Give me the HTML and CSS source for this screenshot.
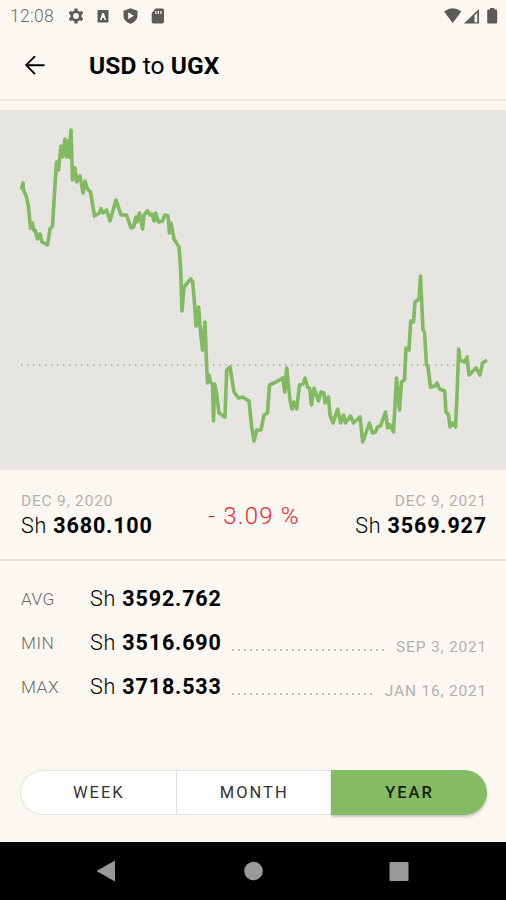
FILE: index.html
```html
<!DOCTYPE html>
<html lang="en">
<head>
    <meta charset="UTF-8">
    <meta name="viewport" content="width=device-width, initial-scale=1.0">
    <title>USD to UGX</title>
    <link rel="stylesheet" href="styles.css">
</head>
<body>
    <div class="screen">
        <!-- Status bar -->
        <div class="status-bar">
            <span class="clock">12:08</span>
            <svg class="notifications" width="100" height="18" viewBox="0 0 100 18">
                <g fill="none" stroke="#5c5b58">
                    <circle cx="9" cy="9" r="4.3" stroke-width="2.8"/>
                    <path d="M9 1.5v3M9 13.5v3M2.5 5.2l2.6 1.5M12.9 11.3l2.6 1.5M2.5 12.8l2.6-1.5M12.9 6.7l2.6-1.5" stroke-width="3.2"/>
                </g>
                <path fill="#5c5b58" fill-rule="evenodd" d="M30.500 3h11v12.500h-11zM33 13h1.600l.6-2h1.700l.6 2h1.600l-2.200-7h-1.700z"/>
                <path fill="#5c5b58" fill-rule="evenodd" d="M63.500 1.200l7 2.600v4.700c0 3.900-2.800 6.800-7 8.300-4.200-1.500-7-4.400-7-8.300V3.800zM61.200 5.300v7l5.600-3.500z"/>
                <path fill="#5c5b58" fill-rule="evenodd" d="M88.500 1.500h6.700q1.800 0 1.800 1.800v11.400q0 1.800-1.800 1.800h-8.700q-1.800 0-1.800-1.800V6zM88.300 4v3h1.200V4zM90.800 4v3H92V4zM93.300 4v3h1.200V4z"/>
            </svg>
            <svg class="system" width="56" height="18" viewBox="0 0 56 18">
                <path fill="#5c5b58" d="M1 4.500q8.700-6.500 17.400 0L9.700 16z"/>
                <path fill="#5c5b58" fill-rule="evenodd" d="M21 16.500L36 2v14.500zM31.500 8.500v6.800h2.800V5.800z"/>
                <path fill="#5c5b58" d="M47 1h4.500v1.600h1.700q1 0 1 1v12q0 1-1 1h-8q-1 0-1-1v-12q0-1 1-1H47z"/>
            </svg>
        </div>

        <!-- Title bar -->
        <header class="app-bar">
            <svg width="20" height="20" viewBox="0 0 20 20">
                <path d="M19.500 9.200H1.500M10 .2L1.200 9.200l8.800 9" fill="none" stroke="#000" stroke-width="1.900"/>
            </svg>
            <h1><b>USD</b> to <b>UGX</b></h1>
        </header>

        <!-- Rate chart -->
        <svg class="chart" width="506" height="360" viewBox="0 0 506 360">
            <line class="average" x1="21" y1="255" x2="456" y2="255"/>
            <polyline class="rate" points="21.7,78 23,73 23.5,80 26.500,87 28.500,97 30.500,118 32.500,113 33.500,120 35,120 37.500,129 40,124 42,132 47.500,135 50,119 52.500,116 54.500,83 56.500,52 58.500,60 61,36 62.500,47 65,29 66.500,47 68.300,31 69,47 71,20 72.500,70 75,58 76.700,72 80,66 83,83 85,71 87.500,79 90.500,82 94.500,106 99.500,103 101,98.500 103,103 106.500,100 110,111 116,90 121,105 126.500,105
                131,118 133.500,117 136,107 137,112 139.500,103 142.500,119 144,105 147.500,101 150,105 152.300,104 154,111 155.700,103 158.500,112 162.500,111 165,105 168,106 169.500,123 171,113 174,129 179,137 180.700,160 182,201 184,177 190.700,169 192.700,172 194.500,193 196,216 198.700,197 200,217 202.500,240 205,212 206.500,253 207.500,273 209,265 210.500,272 212.500,274 213.500,311 214.700,274 216.500,283 219,303 225,307 226.700,260 230,257 234,282 238.500,288 242.500,287 249,291
                251.700,317 254,331 256.700,320 261,320 264,305 267.500,303 269.500,275 276,272 282.700,268 284.700,282 286.700,258 290,290 292,299 294,292 296.700,299 299.500,275 303,274 305,268 307.500,277 309.500,278 311.500,295 314,278 318.500,291 321,282 324,283 325,293 328.500,287 330,305 333,313 337.700,299 340.700,313 343.500,305 345.500,313 350.500,306 353.500,313 360,307 362.700,332
                369.500,313 372.500,323 375.500,322 377.500,317 380.500,316 385.500,302 387.700,318 390,315 393.500,322 396.500,268 399.500,300 401.500,272 404.500,270 406,238 409,240 410.700,211 413.500,212 415,192 419,189 420.500,166 423,220 424.500,222 426.500,255 428,257 430.500,277 435,276 437,273 439.500,279 444.700,281 446,302 448.500,305 450,317 452.500,313 455.500,317 456.700,293 458.700,239 460,250 465,252 467,247 469,265 476,258 480,265 482.500,253 485.700,251"/>
        </svg>

        <!-- Start, change, end -->
        <section class="summary">
            <div class="point">
                <div class="date">DEC 9, 2020</div>
                <div class="amount">Sh <b>3680.100</b></div>
            </div>
            <div class="change">- 3.09 %</div>
            <div class="point end">
                <div class="date">DEC 9, 2021</div>
                <div class="amount">Sh <b>3569.927</b></div>
            </div>
        </section>

        <section class="stats">
            <div class="stat">
                <span class="name">AVG</span>
                <span class="amount">Sh <b>3592.762</b></span>
            </div>
            <div class="stat">
                <span class="name">MIN</span>
                <span class="amount">Sh <b>3516.690</b></span>
                <span class="leader"></span>
                <span class="date">SEP 3, 2021</span>
            </div>
            <div class="stat">
                <span class="name">MAX</span>
                <span class="amount">Sh <b>3718.533</b></span>
                <span class="leader"></span>
                <span class="date">JAN 16, 2021</span>
            </div>
        </section>

        <!-- Period switch -->
        <div class="periods">
            <button>WEEK</button>
            <button>MONTH</button>
            <button class="active">YEAR</button>
        </div>

        <!-- Navigation bar -->
        <nav class="nav-bar">
            <svg width="506" height="58" viewBox="0 0 506 58" fill="#999">
                <path d="M96.500 29L115 18.500v21z"/>
                <circle cx="253.500" cy="29" r="9.300"/>
                <rect x="389.500" y="20" width="19" height="19" rx="1"/>
            </svg>
        </nav>
    </div>
</body>
</html>
```
FILE: styles.css
```css
body {
    margin: 0;
    background-color: #fbf8f1;
    color: #000;
    font-family: Roboto, sans-serif;
}

.screen {
    display: flex;
    flex-direction: column;
    width: 506px;
    height: 900px;
    overflow: hidden;
}

.status-bar {
    display: flex;
    align-items: center;
    height: 32px;
    box-sizing: border-box;
    padding: 0 7px 0 10px;
}

.clock {
    width: 57px;
    color: #6c6b68;
    font-size: 17.5px;
    font-weight: 300;
    letter-spacing: 0.3px;
}

.system {
    margin-left: auto;
}

.app-bar {
    display: flex;
    align-items: center;
    gap: 44px;
    height: 69px;
    box-sizing: border-box;
    padding: 0 25px;
    border-bottom: 2px solid #e8e5df;
    margin-bottom: 9px;
    flex-shrink: 0;
}

h1 {
    margin: 0;
    font-size: 24.5px;
    font-weight: 400;
    letter-spacing: 0.1px;
}

b {
    font-weight: 700;
}

.chart {
    flex-shrink: 0;
    background-color: #e6e5e1;
}

.average {
    stroke: #aaa9a6;
    stroke-width: 1.5;
    stroke-dasharray: 1.5 4.5;
}

.rate {
    fill: none;
    stroke: #82ba62;
    stroke-width: 3.6;
    stroke-linecap: round;
    stroke-linejoin: round;
}

.summary {
    display: flex;
    justify-content: space-between;
    height: 91px;
    box-sizing: border-box;
    padding: 21px 19px 0 21px;
    border-bottom: 2px solid #e8e5df;
}

.date {
    color: #b3b1ad;
    font-size: 15.5px;
    line-height: 20px;
    letter-spacing: 0.8px;
}

.amount {
    font-size: 21.5px;
    font-weight: 300;
    line-height: 30px;
    letter-spacing: 0.85px;
}

.end {
    text-align: right;
}

.change {
    padding-top: 10px;
    color: #f5222d;
    font-size: 24px;
    font-weight: 300;
    line-height: 30px;
    letter-spacing: 1.2px;
}

.stats {
    padding: 16px 19px 0 21px;
}

.stat {
    display: flex;
    align-items: center;
    height: 44px;
}

.name {
    width: 69px;
    color: #6c6b68;
    font-size: 17.3px;
    font-weight: 300;
    line-height: 20px;
    letter-spacing: 0.5px;
}

.leader {
    flex: 1;
    height: 2px;
    margin: 14px 12px 0 10px;
    background: repeating-linear-gradient(90deg, #c4c2bd 0 2px, transparent 2px 6px);
}

.stat .date {
    margin-top: 8px;
}

.periods {
    display: flex;
    height: 45px;
    margin: 61px 19px 27px 20px;
}

.periods button {
    width: 155.5px;
    padding: 0 0 0 1px;
    border: 1px solid #e3e3df;
    border-right: none;
    background-color: #fff;
    color: #333;
    font-family: inherit;
    font-size: 16.5px;
    letter-spacing: 2px;
}

.periods button:first-child {
    border-radius: 23px 0 0 23px;
}

.periods .active {
    flex: 1;
    border: none;
    border-radius: 0 23px 23px 0;
    background-color: #85bb65;
    color: #16220f;
    font-weight: 500;
    box-shadow: 0 2px 3px rgba(0, 0, 0, 0.2);
}

.nav-bar {
    height: 58px;
    background-color: #000;
}
```
